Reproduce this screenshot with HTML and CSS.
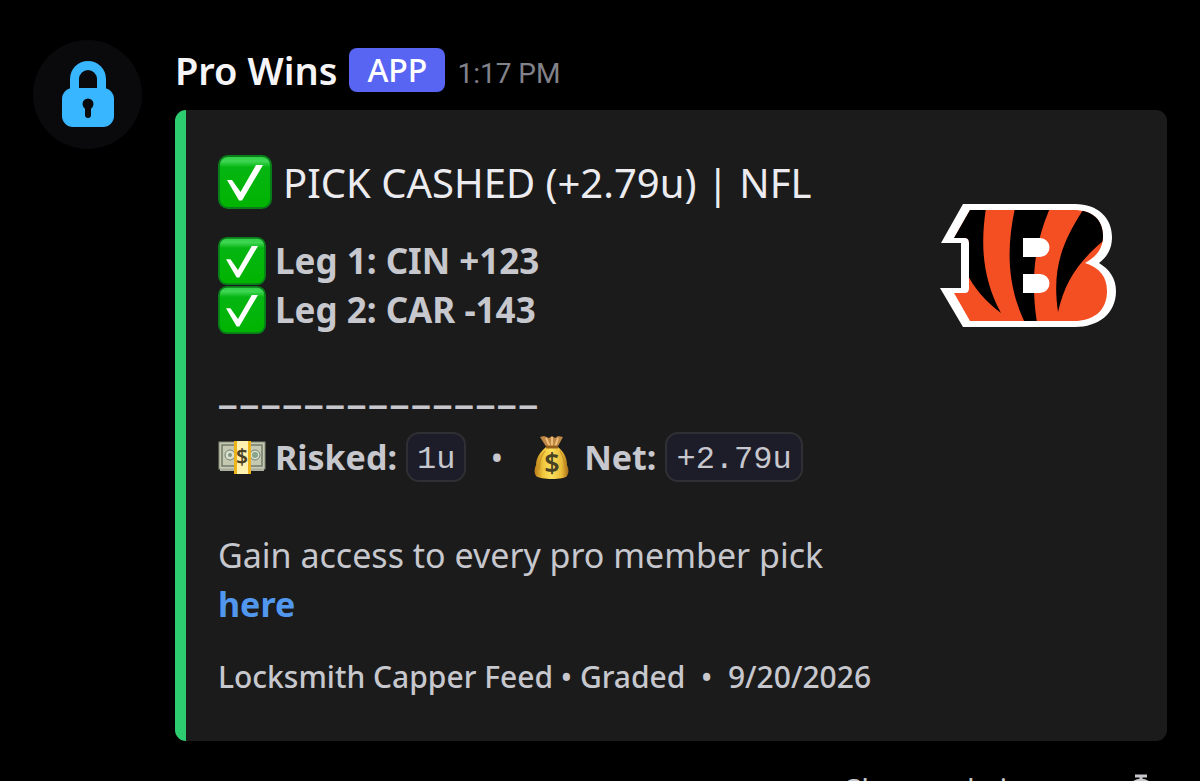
FILE: index.html
```html
<!DOCTYPE html>
<html lang="en">
<head>
  <meta charset="UTF-8" />
  <meta name="viewport" content="width=device-width, initial-scale=1.0"/>
  <title>Pro Wins</title>
  <link rel="stylesheet" href="styles.css">
</head>
<body>
  <!-- Shared shapes -->
  <svg class="defs" width="0" height="0" aria-hidden="true">
    <defs>
      <linearGradient id="green" x1="0" y1="0" x2="0" y2="1">
        <stop offset="0" stop-color="#2fd046"/>
        <stop offset="0.1" stop-color="#3fd653"/>
        <stop offset="0.22" stop-color="#05b512"/>
        <stop offset="1" stop-color="#00b400"/>
      </linearGradient>
      <linearGradient id="sack" x1="0" y1="0" x2="1" y2="0">
        <stop offset="0" stop-color="#b87a1a"/>
        <stop offset="0.25" stop-color="#f0c63c"/>
        <stop offset="0.5" stop-color="#fce05c"/>
        <stop offset="0.8" stop-color="#eabb38"/>
        <stop offset="1" stop-color="#a86c18"/>
      </linearGradient>
      <symbol id="check" viewBox="0 0 54 54">
        <rect x="1" y="1" width="52" height="52" rx="9" fill="url(#green)" stroke="#087d19" stroke-width="2"/>
        <path d="M9 25h5l8.500 12L38 10h7L24 45.500h-3z" fill="#fff"/>
      </symbol>
    </defs>
  </svg>

  <main class="message">
    <!-- Avatar -->
    <div class="avatar">
      <svg width="52" height="68" viewBox="0 0 52 68" aria-hidden="true">
        <path d="M8 34V18a18 18 0 0 1 36 0v16" fill="#38b6ff"/>
        <rect x="0" y="27" width="52" height="39" rx="11" fill="#38b6ff"/>
        <path d="M17 27V18a9 9 0 0 1 18 0v9z" fill="#0a0a0c"/>
        <circle cx="26" cy="43" r="5.500" fill="#0a0a0c"/>
        <path d="M26 43v11" stroke="#0a0a0c" stroke-width="6" stroke-linecap="round"/>
      </svg>
    </div>

    <div class="content">
      <header class="header">
        <span class="name">Pro Wins</span>
        <span class="tag">APP</span>
        <time class="time">1:17 PM</time>
      </header>

      <!-- Embed -->
      <article class="embed">
        <div class="embed-body">
          <h1 class="title"><svg class="emoji-big" aria-hidden="true"><use href="#check"/></svg>PICK CASHED (+2.79u) | NFL</h1>
          <div class="legs">
            <div class="row"><svg class="emoji" aria-hidden="true"><use href="#check"/></svg><b>Leg 1: CIN +123</b></div>
            <div class="row"><svg class="emoji" aria-hidden="true"><use href="#check"/></svg><b>Leg 2: CAR -143</b></div>
          </div>
          <div class="divider">
            <span>–</span><span>–</span><span>–</span><span>–</span><span>–</span>
            <span>–</span><span>–</span><span>–</span><span>–</span><span>–</span>
            <span>–</span><span>–</span><span>–</span><span>–</span><span>–</span>
          </div>
          <div class="row stats">
            <svg class="emoji" viewBox="0 0 48 48" aria-hidden="true">
              <path d="M2 34h44v4H2z" fill="#8d927f"/>
              <rect x="1" y="9" width="46" height="27" fill="#c5c9b2" stroke="#858b78"/>
              <path d="M4 12h40v21H4z" fill="none" stroke="#727c69" stroke-width="1.500"/>
              <path d="M2 35h44M2 37h44" stroke="#c7c9ba"/>
              <circle cx="12" cy="22" r="5" fill="#d9dfcd" stroke="#738071"/>
              <circle cx="37" cy="22" r="5" fill="#d9dfcd" stroke="#738071"/>
              <circle cx="12" cy="22" r="2" fill="#809580"/>
              <circle cx="37" cy="22" r="3" fill="#86a58a"/>
              <path d="M16 8h17v33H16z" fill="#eeb51a"/>
              <path d="M19 8h11v33H19z" fill="#fff1b0"/>
              <text class="sign" x="24" y="31" font-size="21">$</text>
            </svg>
            <b>Risked:</b><code>1u</code>
            <span class="dot">•</span>
            <svg class="emoji" viewBox="0 0 48 48" aria-hidden="true">
              <path d="M17 3l5 2 3-2 3 2 3-2 5 1-6 11H20L13 4z" fill="#bd8746"/>
              <path d="M19 5l4 9M25 4v10M31 5l-3 9" stroke="#efbd78" stroke-width="2"/>
              <path d="M19 14h12c6 5 9 11 9 18 2 4 2 8 0 11-2 4-27 4-31 0-2-3-2-7 0-11 0-7 4-13 10-18z" fill="url(#sack)"/>
              <path d="M18 18c-4 5-6 12-6 19M33 18c3 5 5 12 5 18" fill="none" stroke="#c38d23"/>
              <path d="M19 14h12" stroke="#93601d" stroke-width="3"/>
              <text class="sign" x="25" y="40" font-size="27">$</text>
            </svg>
            <b>Net:</b><code>+2.79u</code>
          </div>
          <p class="promo">Gain access to every pro member pick<br><a href="#">here</a></p>
          <footer class="footer">Locksmith Capper Feed • Graded &nbsp;•&nbsp; 9/20/2026</footer>
        </div>

        <!-- Team logo -->
        <svg class="logo" viewBox="0 0 220 150" role="img" aria-label="Cincinnati Bengals">
          <defs>
            <clipPath id="b-shape">
              <path d="M50 20H153C173 20 183 30 183 46C183 59 176 67 165 73C180 78 187 87 187 101C187 122 172 131 154 131H50L34 103H45Q49 103 49 98V53Q49 48 45 48H34z"/>
            </clipPath>
          </defs>
          <path d="M43 14H155C178 14 192 28 192 47C192 59 187 67 179 73C189 79 196 88 196 101C196 124 178 137 155 137H43L20 98H41V53H21z" fill="#fff"/>
          <g clip-path="url(#b-shape)">
            <path d="M30 15h165v120H30z" fill="#f44e23"/>
            <path d="M30 18H66C61 51 61 86 81 123C65 111 54 98 46 82V51H30zM95 18H130C113 57 111 93 117 133H105C86 93 87 55 95 18zM163 20C141 54 132 80 138 122C145 91 160 68 190 46V18z" fill="#000"/>
          </g>
          <path d="M103 48h17a9 9 0 0 1 0 19h-17zM103 84h17a9 9 0 0 1 0 19h-17z" fill="#fff"/>
        </svg>
      </article>

      <div class="slowmode">
        <span>Slowmode is on</span>
        <svg width="32" height="36" viewBox="0 0 32 36" aria-hidden="true">
          <path d="M10 4h12M16 4v5" stroke="#c7c7cc" stroke-width="3"/>
          <circle cx="16" cy="20" r="12" fill="none" stroke="#c7c7cc" stroke-width="3"/>
        </svg>
      </div>
    </div>
  </main>
</body>
</html>
```
FILE: styles.css
```css
* {
  box-sizing: border-box;
}

body {
  margin: 0;
  height: 100vh;
  overflow: hidden;
  background: #000;
  color: #c7c7ce;
  font-family: "Noto Sans", "Open Sans", sans-serif;
}

.defs {
  position: absolute;
}

.message {
  display: flex;
  gap: 33px;
  padding: 40px 33px 0;
}

.avatar {
  display: flex;
  flex: none;
  justify-content: center;
  align-items: center;
  width: 109px;
  height: 109px;
  border-radius: 50%;
  background: #0a0a0c;
}

.content {
  flex: 1;
}

.header {
  display: flex;
  align-items: center;
  gap: 12px;
  height: 60px;
  margin-bottom: 10px;
}

.name {
  color: #f5f5f8;
  font-size: 38px;
  font-weight: 600;
}

.tag {
  padding: 0 18px;
  border-radius: 8px;
  background: #5865f2;
  color: #fff;
  font-size: 32px;
  font-weight: 500;
  line-height: 44px;
}

.time {
  padding-top: 6px;
  color: #82828b;
  font-family: Roboto, "Noto Sans", sans-serif;
  font-size: 28px;
}

.embed {
  display: flex;
  justify-content: space-between;
  padding: 39px 32px 40px;
  border-left: 11px solid #2ecc71;
  border-radius: 11px;
  background: #1b1b1b;
}

.title {
  display: flex;
  align-items: center;
  gap: 11px;
  height: 66px;
  margin: 0 0 21px;
  color: #ececf0;
  font-size: 40px;
  font-weight: 400;
  white-space: nowrap;
}

.row {
  display: flex;
  align-items: center;
  gap: 9px;
  height: 49px;
  font-size: 35px;
  white-space: nowrap;
}

.stats {
  font-size: 34px;
}

.emoji-big {
  width: 54px;
  height: 54px;
}

.emoji {
  flex: none;
  width: 48px;
  height: 48px;
}

.divider {
  display: flex;
  gap: 2px;
  height: 54px;
  margin-top: 44px;
  font-family: "Liberation Sans", sans-serif;
  font-size: 35px;
  font-weight: 700;
  line-height: 54px;
}

.sign {
  fill: #494325;
  font-family: "Noto Sans", sans-serif;
  font-weight: 600;
  text-anchor: middle;
}

code {
  padding: 6px 9px 0;
  border: 2px solid #303034;
  border-radius: 13px;
  background: #1d1c29;
  font-family: "Liberation Mono", monospace;
  font-size: 32px;
  line-height: 40px;
}

.dot {
  margin: 0 15px;
}

.promo {
  margin: 50px 0 0;
  font-size: 34px;
  line-height: 49px;
}

.promo a {
  color: #5197ed;
  font-weight: 700;
  text-decoration: none;
}

.footer {
  margin-top: 24px;
  font-size: 30px;
  font-weight: 500;
  line-height: 48px;
  white-space: nowrap;
}

.logo {
  flex: none;
  width: 220px;
  height: 150px;
  margin: 41px -5px 0 0;
}

.slowmode {
  display: flex;
  justify-content: flex-end;
  align-items: center;
  gap: 59px;
  margin-top: 28px;
  padding-right: 10px;
  color: #c7c7cc;
  font-size: 30px;
}
```
